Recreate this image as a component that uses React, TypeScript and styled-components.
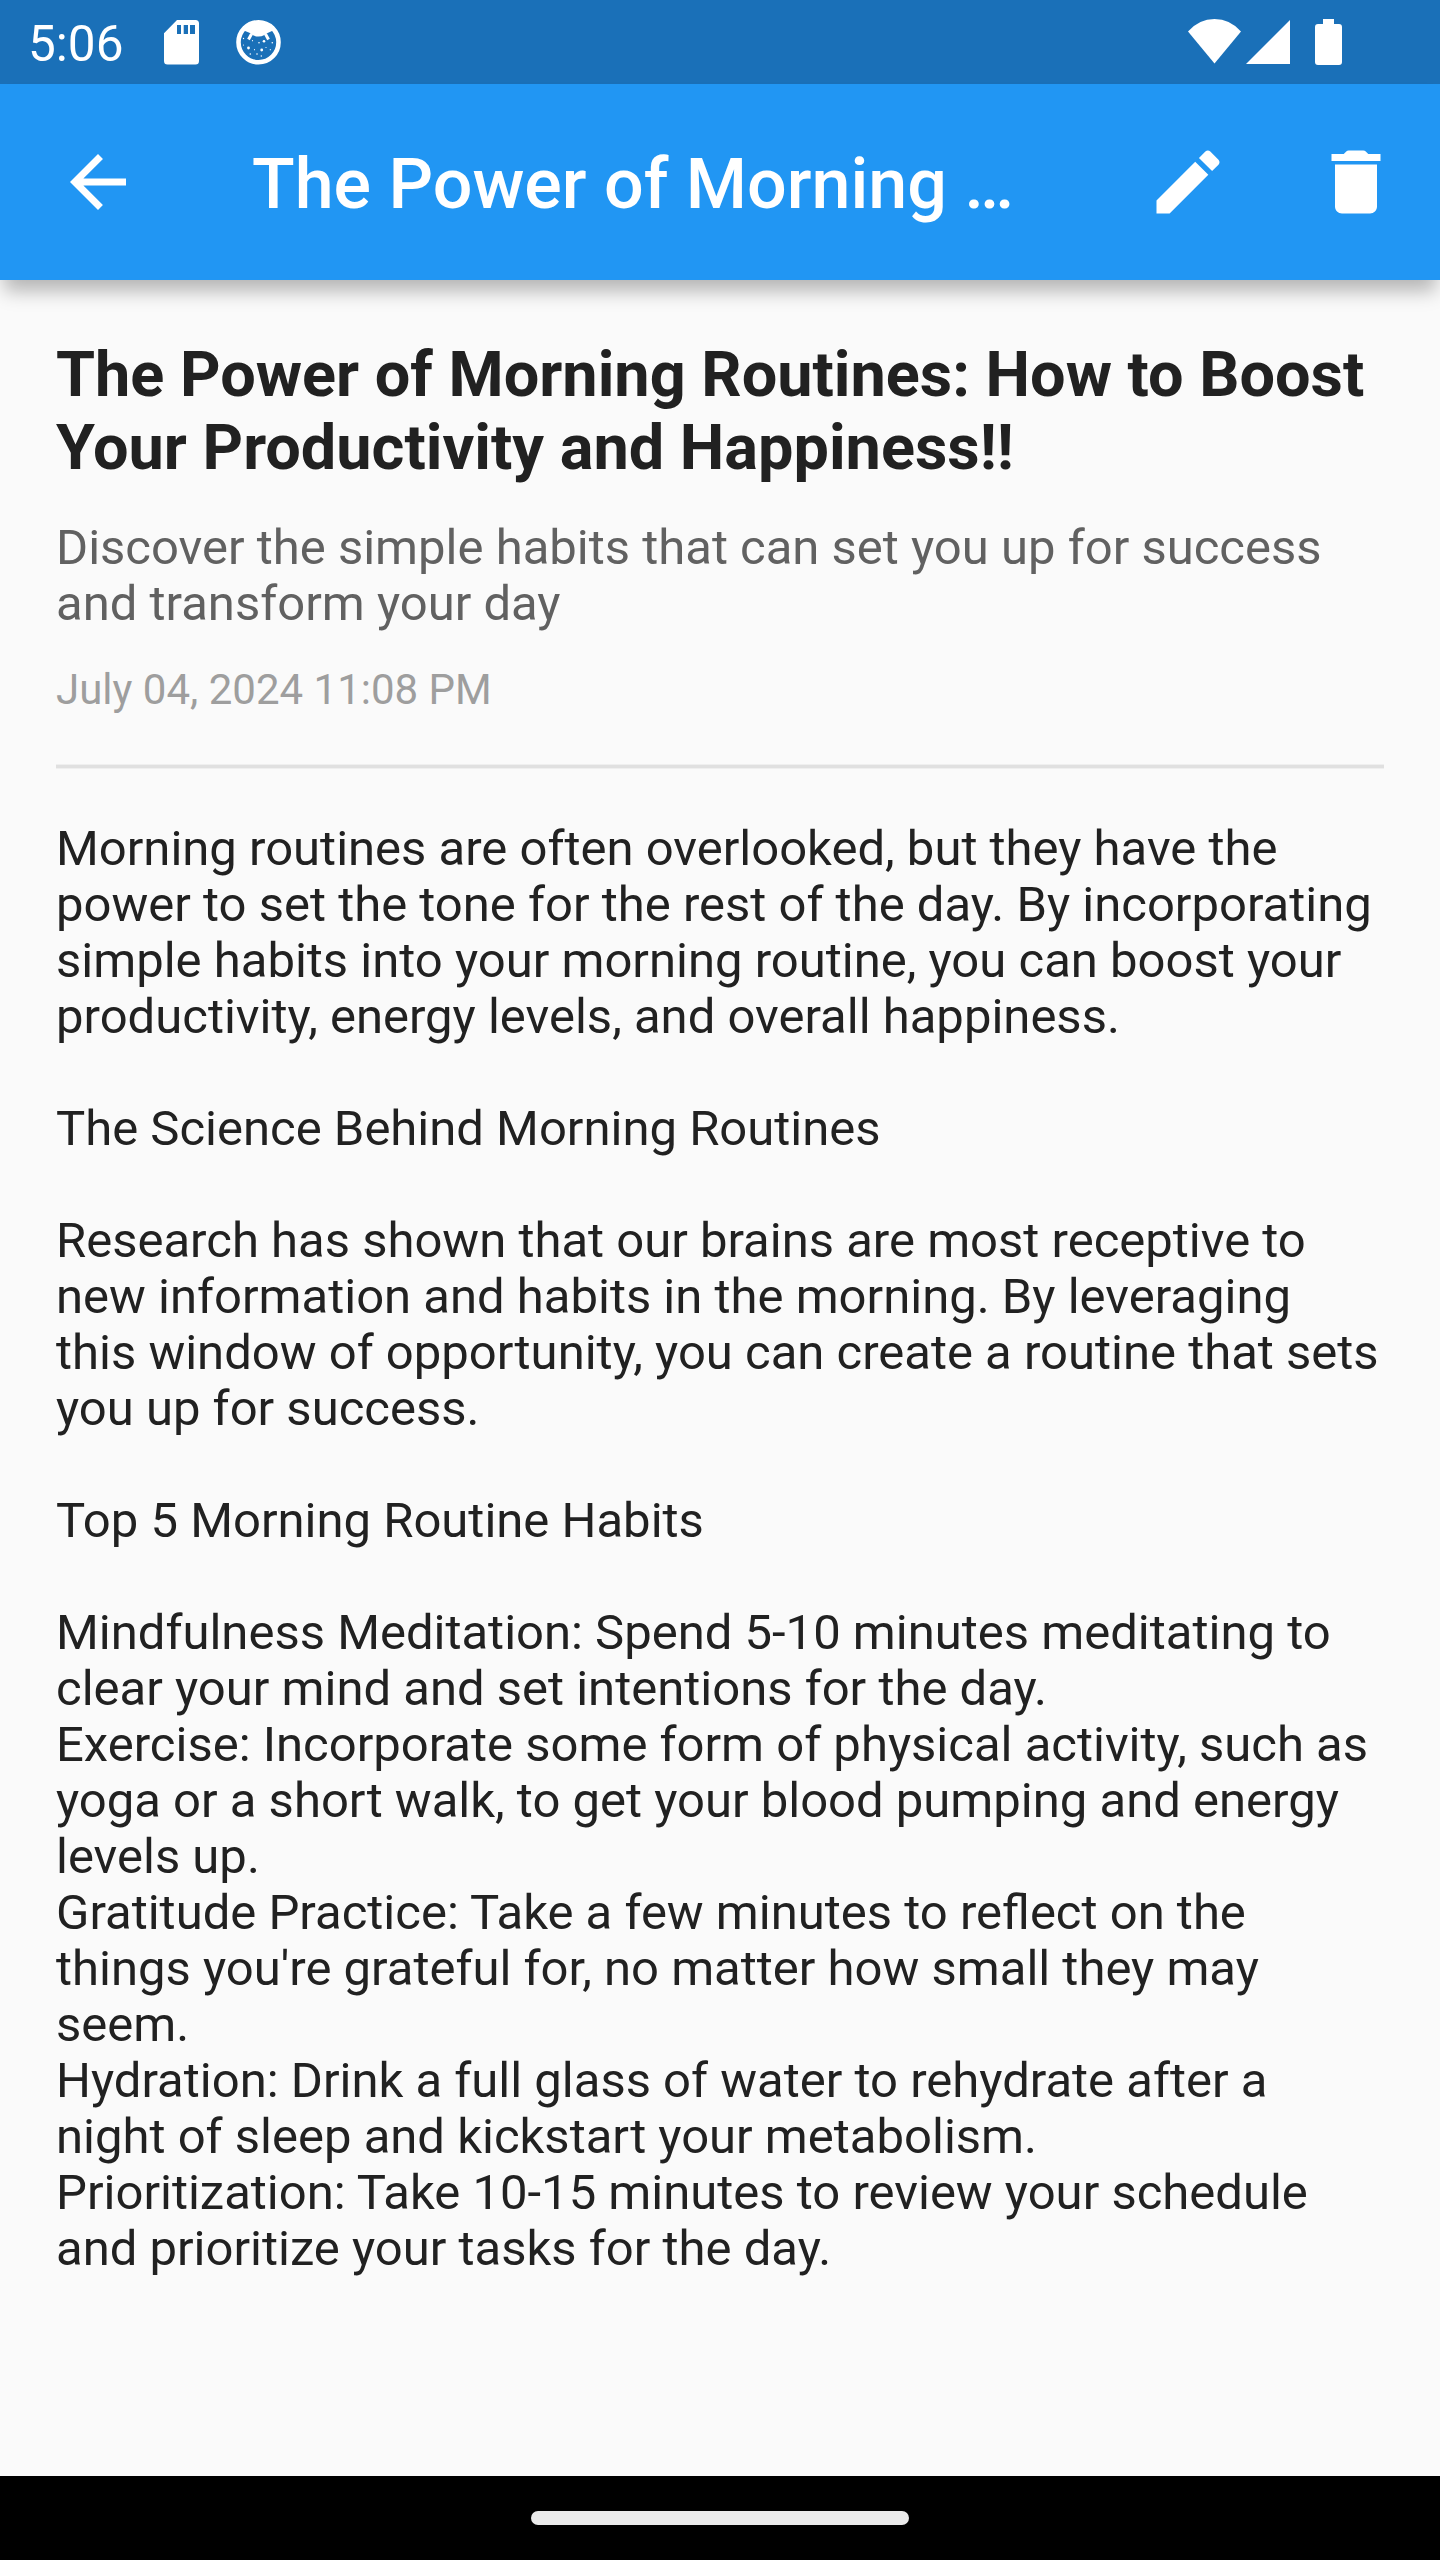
import React from "react";
import styled, { createGlobalStyle } from "styled-components";

const GlobalStyle = createGlobalStyle`
  body { margin: 0; background: #fafafa; }
  * { box-sizing: border-box; }
`;

const Screen = styled.div`
  width: 1440px;
  height: 2560px;
  display: flex;
  flex-direction: column;
  overflow: hidden;
  background: #fafafa;
  font-family: Roboto, "Liberation Sans", sans-serif;
  color: #212121;
`;

const StatusBar = styled.div`
  height: 84px;
  flex: none;
  display: flex;
  align-items: flex-start;
  padding: 0 98px 0 28px;
  background: #1a70b8;
`;

const Clock = styled.span`
  width: 136px;
  font-size: 49.5px;
  line-height: 88px;
  color: #fff;
`;

const StatusIcon = styled.svg<{ $gap?: number; $top?: number }>`
  flex: none;
  display: block;
  fill: #fff;
  margin-left: ${({ $gap = 0 }) => $gap}px;
  margin-top: ${({ $top = 20 }) => $top}px;
`;

const Spacer = styled.div`
  flex: 1;
`;

const AppBar = styled.header`
  height: 196px;
  flex: none;
  display: flex;
  align-items: center;
  position: relative;
  background: #2196f3;
  box-shadow: 0 15px 18px -4px rgba(0, 0, 0, 0.28);
`;

const IconButton = styled.button<{ $width: number }>`
  width: ${({ $width }) => $width}px;
  height: 168px;
  flex: none;
  display: flex;
  align-items: center;
  justify-content: center;
  padding: 0;
  border: 0;
  background: none;

  svg {
    width: 84px;
    height: 84px;
    fill: #fff;
  }
`;

const BarTitle = styled.div`
  flex: 1;
  margin-left: 56px;
  padding-top: 4px;
  font-size: 70px;
  font-weight: 500;
  line-height: 84px;
  color: #fff;
  white-space: nowrap;
`;

const Article = styled.main`
  flex: 1;
  padding: 58px 56px 0;
`;

const Heading = styled.h1`
  margin: 0 0 36px;
  font-size: 63px;
  font-weight: 700;
  line-height: 73px;
`;

const Subtitle = styled.p`
  margin: 0 0 33px;
  font-size: 49px;
  line-height: 56px;
  color: #616161;
`;

const DateLine = styled.p`
  margin: 0;
  font-size: 42px;
  line-height: 49px;
  color: #9e9e9e;
`;

const Divider = styled.div`
  height: 5px;
  margin: 50px 0 52px;
  background: #e0e0e0;
  border: solid #efefef;
  border-width: 1px 0;
`;

const Body = styled.div`
  padding-right: 4px;
  font-size: 49px;
  line-height: 56px;
  white-space: pre-wrap;
`;

const NavBar = styled.footer`
  height: 84px;
  flex: none;
  display: flex;
  align-items: center;
  justify-content: center;
  background: #000;
`;

const NavHandle = styled.div`
  width: 378px;
  height: 14px;
  border-radius: 7px;
  background: #ebebeb;
`;

const CONTENT = `Morning routines are often overlooked, but they have the power to set the tone for the rest of the day. By incorporating simple habits into your morning routine, you can boost your productivity, energy levels, and overall happiness.

The Science Behind Morning Routines

Research has shown that our brains are most receptive to new information and habits in the morning. By leveraging this window of opportunity, you can create a routine that sets you up for success.

Top 5 Morning Routine Habits

Mindfulness Meditation: Spend 5-10 minutes meditating to clear your mind and set intentions for the day.
Exercise: Incorporate some form of physical activity, such as yoga or a short walk, to get your blood pumping and energy levels up.
Gratitude Practice: Take a few minutes to reflect on the things you're grateful for, no matter how small they may seem.
Hydration: Drink a full glass of water to rehydrate after a night of sleep and kickstart your metabolism.
Prioritization: Take 10-15 minutes to review your schedule and prioritize your tasks for the day.`;

const SdCard = () => (
  <StatusIcon width="35" height="45" viewBox="0 0 35 45">
    <path
      fillRule="evenodd"
      d="M13 0H31.5Q35 0 35 3.5V41Q35 44.5 31.5 44.5H3.5Q0 44.5 0 41V13.3ZM13 5V14H17V5ZM19.7 5V14H24V5ZM26 5V14H31V5Z"
    />
  </StatusIcon>
);

const DOTS: [number, number, number][] = [
  [7.5, 18.5, 0.7], [7.5, 25, 0.6], [16.5, 20.7, 0.6], [23, 22.7, 0.8], [28, 21.3, 1.3],
  [36.3, 22.7, 0.8], [12.5, 28, 1.4], [18.5, 29.7, 0.6], [25.7, 30, 1.4], [30, 27.5, 0.6],
  [34.3, 29.7, 0.6], [14.3, 34, 0.8], [21, 34, 0.8], [25.3, 36, 0.7],
];

const CatBadge = () => (
  <StatusIcon width="45" height="45" viewBox="0 0 45 45" $gap={37}>
    <circle cx="22.5" cy="22.3" r="20" fill="none" stroke="#fff" strokeWidth="4.6" />
    <path d="M7 7Q22 -3 38 7L36 11Q31 13 28.5 15Q22.5 18 16.5 15Q14 12.5 9 11Z" />
    <path d="M15.5 14L12.5 19.5M29.5 14L32.5 19.5" stroke="#fff" strokeWidth="3" />
    {DOTS.map(([x, y, r]) => (
      <circle key={`${x}-${y}`} cx={x} cy={y} r={r} />
    ))}
  </StatusIcon>
);

export default function App() {
  return (
    <>
      <GlobalStyle />
      <Screen>
        <StatusBar>
          <Clock>5:06</Clock>
          <SdCard />
          <CatBadge />
          <Spacer />
          <StatusIcon width="53" height="45" viewBox="0 0 53 45" $top={19}>
            <path d="M0 12.5Q11 0 26.5 0Q42 0 53 12.5L26.5 44.5Z" />
          </StatusIcon>
          <StatusIcon width="44" height="44" viewBox="0 0 44 44" $gap={5}>
            <path d="M0 44L44 0V44Z" />
          </StatusIcon>
          <StatusIcon width="27" height="46" viewBox="0 0 27 46" $gap={25} $top={19}>
            <path d="M8 0H19V5H24Q27 5 27 8V43Q27 46 24 46H3Q0 46 0 43V8Q0 5 3 5H8Z" />
          </StatusIcon>
        </StatusBar>
        <AppBar>
          <IconButton $width={196} aria-label="Back">
            <svg viewBox="0 0 24 24">
              <path d="M20 11H7.83l5.59-5.59L12 4l-8 8 8 8 1.41-1.41L7.83 13H20v-2z" />
            </svg>
          </IconButton>
          <BarTitle>The Power of Morning …</BarTitle>
          <IconButton $width={168} aria-label="Edit">
            <svg viewBox="0 0 24 24">
              <path d="M3 17.25V21h3.75L17.81 9.94l-3.75-3.75L3 17.25zM20.71 7.04c.39-.39.39-1.02 0-1.41l-2.34-2.34c-.39-.39-1.02-.39-1.41 0l-1.83 1.83 3.75 3.75 1.83-1.83z" />
            </svg>
          </IconButton>
          <IconButton $width={168} aria-label="Delete">
            <svg viewBox="0 0 24 24">
              <path d="M6 19c0 1.1.9 2 2 2h8c1.1 0 2-.9 2-2V7H6v12zM19 4h-3.5l-.71-.71c-.18-.18-.44-.29-.7-.29H9.91c-.26 0-.52.11-.7.29L8.5 4H5v2h14V4z" />
            </svg>
          </IconButton>
        </AppBar>
        <Article>
          <Heading>The Power of Morning Routines: How to Boost Your Productivity and Happiness!!</Heading>
          <Subtitle>Discover the simple habits that can set you up for success and transform your day</Subtitle>
          <DateLine>July 04, 2024 11:08 PM</DateLine>
          <Divider />
          <Body>{CONTENT}</Body>
        </Article>
        <NavBar>
          <NavHandle />
        </NavBar>
      </Screen>
    </>
  );
}
